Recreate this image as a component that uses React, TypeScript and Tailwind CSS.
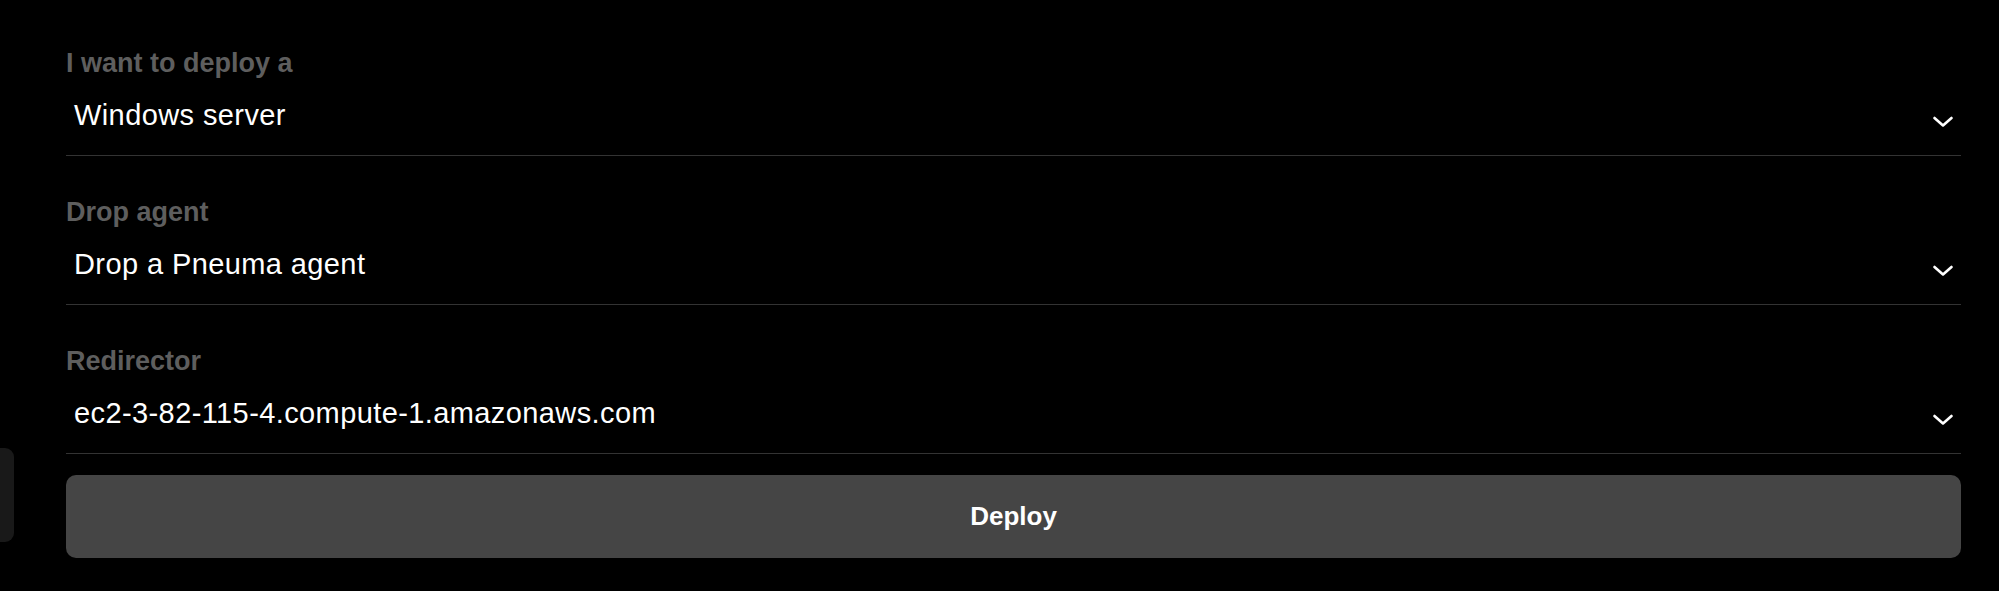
import { ChevronLeft } from 'lucide-react';

interface FieldProps {
  label: string;
  value: string;
  first?: boolean;
}

function Chevron() {
  return (
    <svg width="20" height="12" viewBox="0 0 20 12" fill="none" className="shrink-0">
      <polyline
        points="1.5,2 10,9.5 18.5,2"
        stroke="white"
        strokeWidth="2.6"
        strokeLinecap="round"
        strokeLinejoin="round"
      />
    </svg>
  );
}

function SelectField({ label, value, first = false }: FieldProps) {
  return (
    <div className={first ? '' : 'mt-[40px]'}>
      <div className="text-[27px] leading-[32px] font-bold text-[#5e5e5e]">{label}</div>
      <button className="mt-[18px] flex w-full items-center justify-between border-b border-[#333333] pl-2 pr-[8px] pt-0 pb-[22px] text-left">
        <span className="text-[29px] leading-[36px] tracking-[0.4px] text-white">{value}</span>
        <span className="pt-[14px]">
          <Chevron />
        </span>
      </button>
    </div>
  );
}

export default function App() {
  return (
    <div
      className="relative h-[591px] w-full overflow-hidden bg-black"
      style={{ fontFamily: '"Liberation Sans", Arial, sans-serif' }}
    >
      {/* collapsed sidebar handle, mostly off screen */}
      <div className="absolute left-[-30px] top-[448px] flex h-[94px] w-[44px] items-center justify-end rounded-[9px] bg-[#191919] pr-[12px]">
        <ChevronLeft size={16} strokeWidth={2} className="text-[#9a9a9a]" />
      </div>

      <div className="pl-[66px] pr-[38px] pt-[47px]">
        <SelectField first label="I want to deploy a" value="Windows server" />
        <SelectField label="Drop agent" value="Drop a Pneuma agent" />
        <SelectField label="Redirector" value="ec2-3-82-115-4.compute-1.amazonaws.com" />

        <button className="mt-[21px] flex h-[83px] w-full items-center justify-center rounded-[10px] bg-[#454545] text-[26px] font-bold text-white">
          Deploy
        </button>
      </div>
    </div>
  );
}
